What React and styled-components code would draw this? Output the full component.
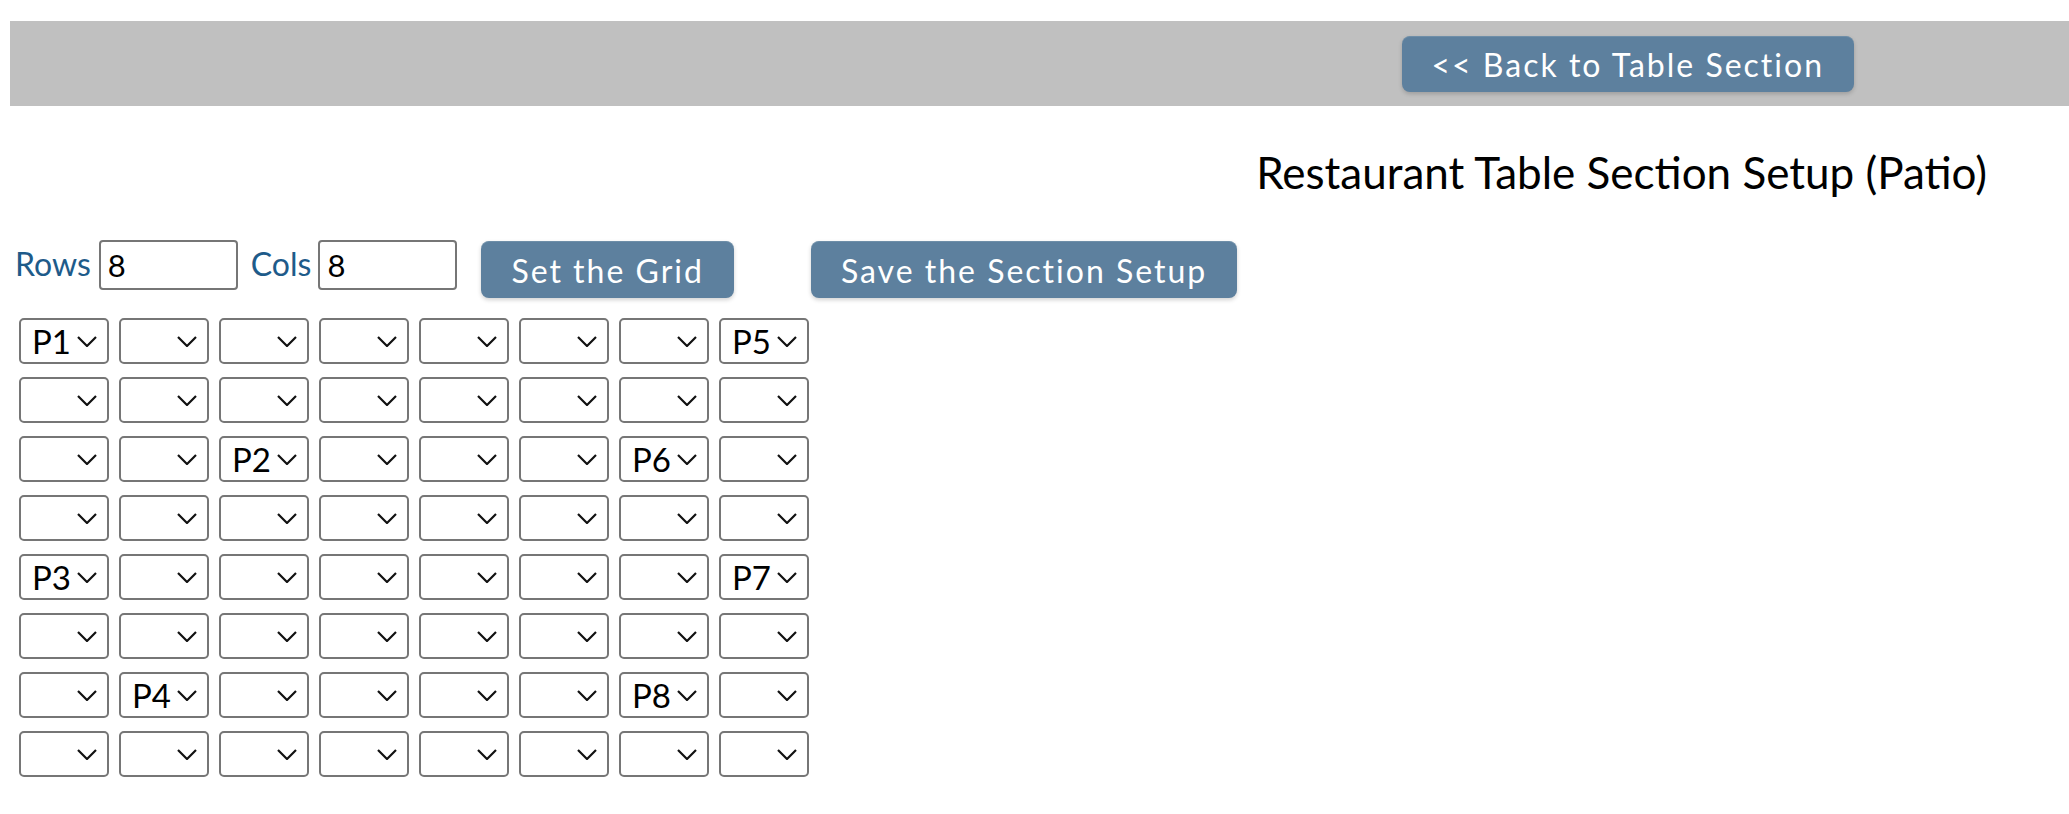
import React, { useState } from "react";
import styled, { createGlobalStyle } from "styled-components";

const GlobalStyle = createGlobalStyle`
  body {
    margin: 0;
    background: #ffffff;
    font-family: Lato, "Open Sans", sans-serif;
  }
`;

const chevron =
  "data:image/svg+xml,%3Csvg xmlns='http://www.w3.org/2000/svg' width='20' height='11' viewBox='0 0 20 11'%3E%3Cpath d='M1 1l9 9 9-9' fill='none' stroke='%23111' stroke-width='2.2'/%3E%3C/svg%3E";

const Page = styled.div`
  padding: 21px 0 40px 10px;
`;

const TopBar = styled.div`
  height: 85px;
  background: #c0c0c0;
  display: flex;
  align-items: center;
  justify-content: flex-end;
  padding-right: 215px;
`;

const ActionButton = styled.button`
  height: ${(p) => p.$height || 57}px;
  padding: 0 ${(p) => p.$pad || 30}px;
  margin: ${(p) => p.$margin || "0"};
  background: #5d809e;
  color: #ffffff;
  border: none;
  border-top: 1px solid #6e8ea8;
  border-radius: 8px;
  box-shadow: 0 2px 4px rgba(0, 0, 0, 0.18);
  font-family: Lato, "Open Sans", sans-serif;
  font-size: 32px;
  letter-spacing: 2px;
  cursor: pointer;
  white-space: nowrap;
`;

const Title = styled.h1`
  margin: 40px 0 0;
  padding-right: 82px;
  text-align: right;
  font-size: 44px;
  font-weight: 400;
  color: #000000;
`;

const Controls = styled.div`
  display: flex;
  align-items: flex-start;
  margin-top: 42px;
  padding-left: 5px;
`;

const Label = styled.label`
  margin: 5px ${(p) => p.$gap || 9}px 0 0;
  font-size: 32px;
  line-height: 38px;
  color: #1e5b8a;
`;

const NumberInput = styled.input`
  box-sizing: border-box;
  width: 139px;
  height: 50px;
  margin-right: ${(p) => p.$after || 0}px;
  padding: 0 7px;
  border: 2px solid #767676;
  border-radius: 4px;
  font-family: Lato, "Open Sans", sans-serif;
  font-size: 31px;
  color: #000000;
  outline: none;
`;

const Grid = styled.div`
  display: grid;
  grid-template-columns: repeat(8, 90px);
  column-gap: 10px;
  row-gap: 13px;
  margin-top: 20px;
  padding-left: 9px;
`;

const Cell = styled.select`
  appearance: none;
  -webkit-appearance: none;
  box-sizing: border-box;
  width: 90px;
  height: 46px;
  padding: 0 34px 0 11px;
  border: 2px solid #767676;
  border-radius: 5px;
  background: #ffffff url("${chevron}") no-repeat right 10px center / 20px 11px;
  font-family: Lato, "Open Sans", sans-serif;
  font-size: 33px;
  color: #000000;
  outline: none;
`;

const tables = ["P1", "P2", "P3", "P4", "P5", "P6", "P7", "P8"];

const initial = {
  "0-0": "P1",
  "0-7": "P5",
  "2-2": "P2",
  "2-6": "P6",
  "4-0": "P3",
  "4-7": "P7",
  "6-1": "P4",
  "6-6": "P8",
};

export default function App() {
  const [rows, setRows] = useState("8");
  const [cols, setCols] = useState("8");
  const [layout, setLayout] = useState(initial);

  const setCell = (key, value) => {
    setLayout({ ...layout, [key]: value });
  };

  const renderCells = () => {
    const cells = [];
    for (let r = 0; r < 8; r++) {
      for (let c = 0; c < 8; c++) {
        const key = `${r}-${c}`;
        cells.push(
          <Cell key={key} value={layout[key] || ""} onChange={(e) => setCell(key, e.target.value)}>
            <option value=""></option>
            {tables.map((t) => (
              <option key={t} value={t}>{t}</option>
            ))}
          </Cell>
        );
      }
    }
    return cells;
  };

  return (
    <Page>
      <GlobalStyle />
      <TopBar>
        <ActionButton $height={56} $pad={30}>&lt;&lt; Back to Table Section</ActionButton>
      </TopBar>
      <Title>Restaurant Table Section Setup (Patio)</Title>
      <Controls>
        <Label $gap={8}>Rows</Label>
        <NumberInput $after={13} value={rows} onChange={(e) => setRows(e.target.value)} />
        <Label $gap={7}>Cols</Label>
        <NumberInput $after={24} value={cols} onChange={(e) => setCols(e.target.value)} />
        <ActionButton $margin="1px 77px 0 0">Set the Grid</ActionButton>
        <ActionButton $margin="1px 0 0 0">Save the Section Setup</ActionButton>
      </Controls>
      <Grid>{renderCells()}</Grid>
    </Page>
  );
}
